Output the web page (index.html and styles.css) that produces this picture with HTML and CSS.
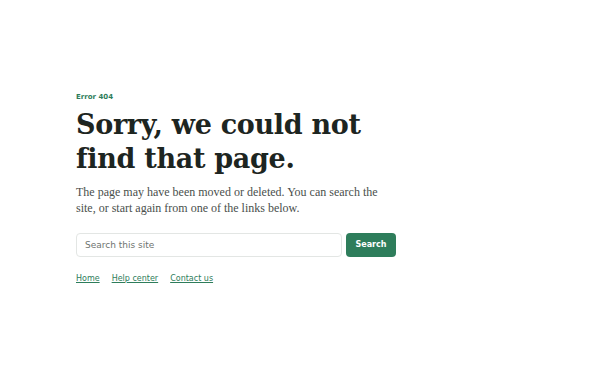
FILE: index.html
```html
<!DOCTYPE html>
<html lang="en">
<head>
<meta charset="utf-8">
<title>Page not found</title>
<link rel="stylesheet" href="styles.css">
</head>
<body>
<main class="page">
  <section class="content">
    <p class="eyebrow">Error 404</p>
    <h1 class="title">Sorry, we could not find that page.</h1>
    <p class="lead">The page may have been moved or deleted. You can search the site, or start again from one of the links below.</p>
    <form class="search" onsubmit="return false">
      <input class="search-input" type="text" placeholder="Search this site">
      <button class="search-btn" type="submit">Search</button>
    </form>
    <nav class="links">
      <a href="#">Home</a>
      <a href="#">Help center</a>
      <a href="#">Contact us</a>
    </nav>
  </section>
</main>
</body>
</html>
```
FILE: styles.css
```css
html, body {
  margin: 0;
  padding: 0;
  background: #ffffff;
}
.page {
  height: 375px;
  display: flex;
  align-items: center;
  padding-left: 76px;
  box-sizing: border-box;
}
.content {
  width: 320px;
}
.eyebrow {
  margin: 0 0 6px;
  font-family: "DejaVu Sans", sans-serif;
  font-size: 7px;
  line-height: 10px;
  font-weight: bold;
  color: #2e7d5b;
}
.title {
  margin: 0 0 8px;
  font-family: "DejaVu Serif", serif;
  font-size: 27px;
  line-height: 34px;
  font-weight: bold;
  color: #1d2521;
  letter-spacing: -0.3px;
}
.lead {
  margin: 0 0 17px;
  font-family: "Liberation Serif", serif;
  font-size: 12px;
  line-height: 16px;
  color: #4a4f4c;
}
.search {
  display: flex;
  gap: 4px;
  margin: 0 0 17px;
}
.search-input {
  flex: 1;
  height: 24px;
  box-sizing: border-box;
  border: 1px solid #e3e6e4;
  border-radius: 4px;
  padding: 0 8px;
  font-family: "DejaVu Sans", sans-serif;
  font-size: 9px;
  color: #333;
}
.search-input::placeholder {
  color: #6f7470;
}
.search-btn {
  width: 50px;
  height: 24px;
  border: none;
  border-radius: 4px;
  background: #2e7d5b;
  color: #ffffff;
  font-family: "DejaVu Sans", sans-serif;
  font-size: 8px;
  font-weight: bold;
  padding: 0;
}
.links {
  display: flex;
  gap: 12px;
  font-family: "DejaVu Sans", sans-serif;
  font-size: 8px;
  line-height: 10px;
}
.links a {
  color: #2e7d5b;
  text-decoration: underline;
}
```
